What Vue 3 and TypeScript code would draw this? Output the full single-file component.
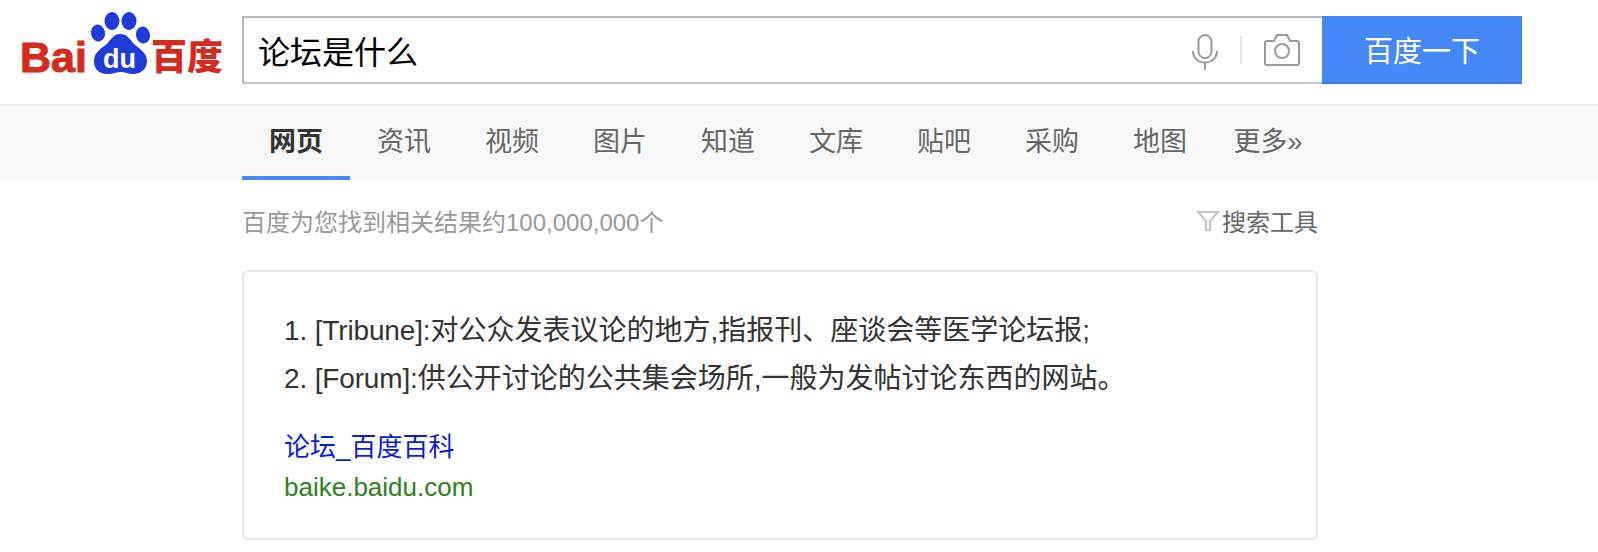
<script setup lang="ts">
import { ref } from 'vue'

// define type section
type Tab = {
  label: string
  active?: boolean
}

type Answer = {
  term: string
  text: string
}

// define variable section
const query = ref('论坛是什么')

const tabs: Tab[] = [
  { label: '网页', active: true },
  { label: '资讯' },
  { label: '视频' },
  { label: '图片' },
  { label: '知道' },
  { label: '文库' },
  { label: '贴吧' },
  { label: '采购' },
  { label: '地图' },
  { label: '更多»' }
]

const answers: Answer[] = [
  { term: '1. [Tribune]:', text: '对公众发表议论的地方,指报刊、座谈会等医学论坛报;' },
  { term: '2. [Forum]:', text: '供公开讨论的公共集会场所,一般为发帖讨论东西的网站。' }
]
</script>

<template>
  <div class="page">
    <header class="top">
      <a class="logo" href="#">
        <svg width="206" height="76" viewBox="0 0 206 76">
          <text x="0" y="62" class="logo_bai">Bai</text>
          <ellipse cx="78" cy="23" rx="7" ry="8.500" transform="rotate(-12 78 23)" fill="#1f3ad8" />
          <ellipse cx="92" cy="11" rx="7.500" ry="9" fill="#1f3ad8" />
          <ellipse cx="109" cy="11" rx="7.500" ry="9" fill="#1f3ad8" />
          <ellipse cx="123" cy="25" rx="7" ry="8.500" transform="rotate(-12 123 25)" fill="#1f3ad8" />
          <path d="M100 24c7 0 10 5 14 10 4 4 13 8 13 17 0 8-6 13-14 13-5 0-8-2-12-2s-8 2-14 2c-8 0-13-5-13-13 0-9 8-13 13-17 4-5 7-10 13-10z" fill="#1f3ad8" />
          <text x="83" y="58" class="logo_du">du</text>
          <text x="131" y="60" class="logo_cn">百度</text>
        </svg>
      </a>
      <form class="search" @submit.prevent>
        <div class="search_box">
          <input v-model="query" class="search_input" type="text" />
          <svg class="mic" width="26" height="36" viewBox="0 0 26 36" fill="none" stroke="#9a9a9a" stroke-width="2">
            <rect x="6.500" y="1" width="13" height="23" rx="6.500" />
            <path d="M1 17c0 7 5 11.500 12 11.500s12-4.500 12-11.500M13 28.500v7.500" />
          </svg>
          <span class="divider"></span>
          <svg class="camera" width="36" height="32" viewBox="0 0 36 32" fill="none" stroke="#9a9a9a" stroke-width="2">
            <path d="M3 7h7l3-6h10l3 6h7a2 2 0 0 1 2 2v20a2 2 0 0 1-2 2H3a2 2 0 0 1-2-2V9a2 2 0 0 1 2-2z" />
            <circle cx="18" cy="17" r="7" />
          </svg>
        </div>
        <button class="search_btn" type="submit">百度一下</button>
      </form>
    </header>

    <nav class="tabs">
      <a v-for="tab in tabs" :key="tab.label" class="tab" :class="{ tab_active: tab.active }" href="#">{{ tab.label }}</a>
    </nav>

    <main class="content">
      <div class="count_row">
        <span class="count">百度为您找到相关结果约100,000,000个</span>
        <span class="tools">
          <svg width="24" height="24" viewBox="0 0 24 24" fill="none" stroke="#c4c4c4" stroke-width="2">
            <path d="M2 4h20l-8 9v9h-4v-9z" />
          </svg>
          搜索工具
        </span>
      </div>
      <section class="card">
        <p v-for="line in answers" :key="line.term" class="answer"><span class="term">{{ line.term }}</span>{{ line.text }}</p>
        <a class="title" href="#">论坛_百度百科</a>
        <div class="url">baike.baidu.com</div>
      </section>
    </main>
  </div>
</template>

<style>
body {
  background: #fff;
}
</style>

<style scoped>
.page {
  font-family: "Liberation Sans", "Noto Sans CJK SC", sans-serif;
  width: 1598px;
  height: 552px;
  overflow: hidden;
}
.top {
  display: flex;
  align-items: flex-start;
  height: 106px;
  box-sizing: border-box;
  padding: 16px 0 0 20px;
  border-bottom: 2px solid #ececec;
}
.logo {
  display: block;
  width: 222px;
  height: 76px;
  margin-top: -6px;
  text-decoration: none;
}
.logo_bai {
  font: bold 43px "Liberation Sans", sans-serif;
  fill: #d52b1e;
  stroke: #d52b1e;
  stroke-width: 1;
}
.logo_du {
  font: bold 27px "Liberation Sans", sans-serif;
  fill: #fff;
}
.logo_cn {
  font: 900 36px "Noto Sans CJK SC", sans-serif;
  fill: #d52b1e;
}
.search {
  display: flex;
  height: 68px;
}
.search_box {
  display: flex;
  align-items: center;
  width: 1080px;
  height: 68px;
  box-sizing: border-box;
  border: 2px solid #b8b8b8;
  border-bottom-color: #c8c8c8;
  border-right: none;
  padding: 0 22px 0 14px;
}
.search_input {
  flex: 1;
  min-width: 0;
  border: none;
  outline: none;
  padding: 0;
  font: 32px "Liberation Sans", "Noto Sans CJK SC", sans-serif;
  color: #000;
}
.mic {
  margin-top: 4px;
}
.divider {
  width: 2px;
  height: 28px;
  background: #e6e6e6;
  margin: 0 22px;
}
.search_btn {
  width: 200px;
  height: 68px;
  border: none;
  border-bottom: 2px solid #3b7cea;
  background: #4588f8;
  color: #fff;
  font: 29px "Liberation Sans", "Noto Sans CJK SC", sans-serif;
  padding: 0;
}
.tabs {
  display: flex;
  height: 74px;
  padding-left: 242px;
  background: #f8f8f8;
}
.tab {
  width: 108px;
  box-sizing: border-box;
  padding-top: 18px;
  text-align: center;
  font-size: 27px;
  line-height: 36px;
  color: #666;
  text-decoration: none;
}
.tab_active {
  color: #333;
  font-weight: bold;
  border-bottom: 4px solid #4588f8;
}
.content {
  width: 1076px;
  margin-left: 242px;
}
.count_row {
  display: flex;
  justify-content: space-between;
  align-items: center;
  height: 80px;
  margin-bottom: 10px;
}
.count {
  font-size: 24px;
  color: #999;
}
.tools {
  display: flex;
  align-items: center;
  gap: 2px;
  font-size: 24px;
  color: #666;
}
.card {
  height: 270px;
  box-sizing: border-box;
  border: 2px solid #e6e6e6;
  border-radius: 6px;
  padding: 35px 40px;
}
.answer {
  margin: 0;
  font-size: 28px;
  line-height: 48px;
  color: #333;
}
.term {
  letter-spacing: -0.15px;
}
.title {
  display: block;
  margin-top: 25px;
  font-size: 26px;
  line-height: 39px;
  color: #0b1ccf;
  text-decoration: none;
}
.url {
  font-size: 26px;
  line-height: 40px;
  color: #2f7f1b;
}
</style>
